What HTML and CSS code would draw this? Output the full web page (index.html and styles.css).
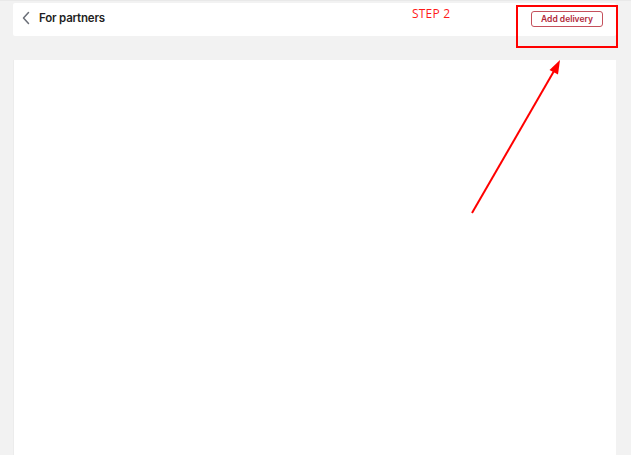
FILE: index.html
```html
<!DOCTYPE html>
<html lang="en">
<head>
<meta charset="utf-8">
<title>For partners</title>
<link rel="stylesheet" href="styles.css">
</head>
<body>
<div class="page">
  <header class="topbar">
    <div class="title-group">
      <svg class="back" width="10" height="14" viewBox="0 0 10 14"><path d="M7.5 1.5 L2.5 7 L7.5 12.5" fill="none" stroke="#6b6f78" stroke-width="1.5" stroke-linecap="round" stroke-linejoin="round"/></svg>
      <span class="title">For partners</span>
    </div>
    <button class="add-btn">Add delivery</button>
  </header>
  <main class="content"></main>
</div>
<div class="step-label">STEP 2</div>
<div class="highlight-box"></div>
<svg class="arrow" width="631" height="455" viewBox="0 0 631 455">
  <line x1="472" y1="213" x2="554" y2="71" stroke="#ff0000" stroke-width="2"/>
  <polygon points="560,60 549.5,70 558,74.5" fill="#ff0000"/>
</svg>
</body>
</html>
```
FILE: styles.css
```css
html, body {
  margin: 0;
  padding: 0;
  height: 100%;
}
body {
  background: #f2f2f2;
  font-family: Inter, "Noto Sans", sans-serif;
  overflow: hidden;
  position: relative;
}
.page {
  display: flex;
  flex-direction: column;
  height: 100%;
  padding: 3px 15px 0 13px;
  box-sizing: border-box;
  gap: 24px;
  border-top: 1px solid #e9e9e9;
}
.topbar {
  height: 33px;
  background: #ffffff;
  border-radius: 2px;
  display: flex;
  align-items: center;
  justify-content: space-between;
  padding: 0 13px 0 8px;
  flex-shrink: 0;
  margin-top: -1px;
}
.title-group {
  display: flex;
  align-items: center;
  gap: 8px;
  margin-bottom: 4px;
}
.back {
  display: block;
  margin-top: 1px;
}
.title {
  font-size: 11.5px;
  font-weight: 600;
  color: #1f1f24;
  letter-spacing: -0.2px;
}
.add-btn {
  width: 72px;
  height: 16px;
  padding: 0;
  border: 1px solid #c4505c;
  border-radius: 3px;
  background: #ffffff;
  color: #b22a3a;
  font-family: Inter, "Noto Sans", sans-serif;
  font-size: 8.5px;
  font-weight: 600;
  margin-bottom: 1px;
}
.content {
  flex: 1;
  background: #ffffff;
  border-left: 1px solid #ececec;
}
.step-label {
  position: absolute;
  left: 412px;
  top: 5px;
  color: #ff1a1a;
  font-family: "Open Sans", sans-serif;
  font-size: 12px;
  font-weight: 500;
  letter-spacing: 0.2px;
}
.highlight-box {
  position: absolute;
  left: 516px;
  top: 5px;
  width: 98px;
  height: 39px;
  border: 2px solid #ff0000;
}
.arrow {
  position: absolute;
  left: 0;
  top: 0;
  pointer-events: none;
}
```
